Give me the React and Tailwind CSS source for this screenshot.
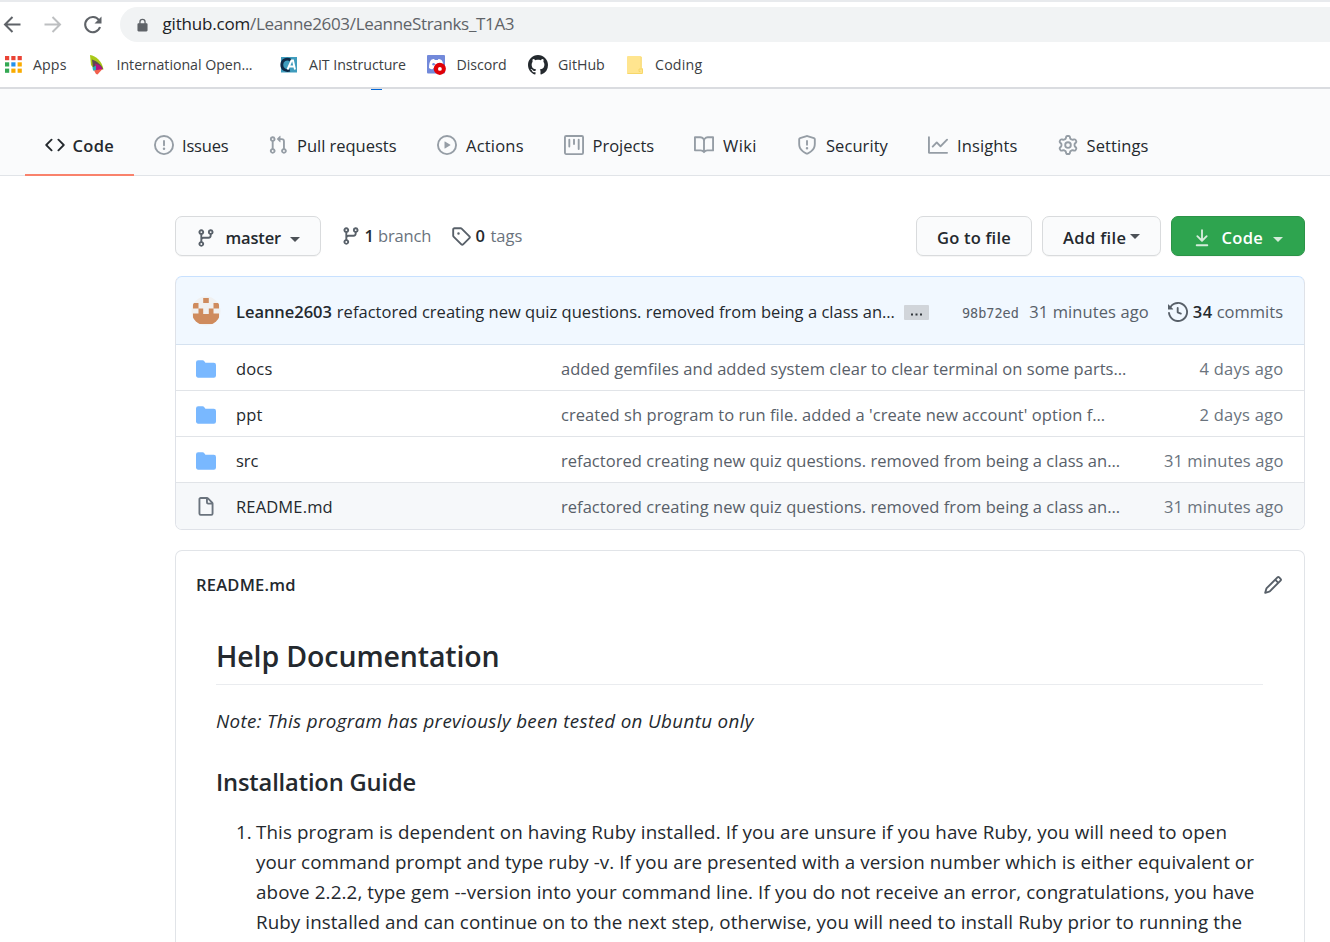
const paths = {
  code: "M4.72 3.22a.75.75 0 011.06 1.06L2.06 8l3.72 3.72a.75.75 0 11-1.06 1.06L.47 8.53a.75.75 0 010-1.06l4.25-4.25zm6.56 0a.75.75 0 10-1.06 1.06L13.94 8l-3.72 3.72a.75.75 0 101.06 1.06l4.25-4.25a.75.75 0 000-1.06l-4.25-4.25z",
  issue: "M8 1.5a6.5 6.5 0 100 13 6.5 6.5 0 000-13zM0 8a8 8 0 1116 0A8 8 0 010 8zm9 3a1 1 0 11-2 0 1 1 0 012 0zm-.25-6.25a.75.75 0 00-1.5 0v3.5a.75.75 0 001.5 0v-3.5z",
  pull: "M7.177 3.073L9.573.677A.25.25 0 0110 .854v4.792a.25.25 0 01-.427.177L7.177 3.427a.25.25 0 010-.354zM3.75 2.5a.75.75 0 100 1.5.75.75 0 000-1.5zm-2.25.75a2.25 2.25 0 113 2.122v5.256a2.251 2.251 0 11-1.5 0V5.372A2.25 2.25 0 011.5 3.25zM11 2.5h-1V4h1a1 1 0 011 1v5.628a2.251 2.251 0 101.5 0V5A2.5 2.5 0 0011 2.5zm1 10.25a.75.75 0 111.5 0 .75.75 0 01-1.5 0zM3.75 12a.75.75 0 100 1.5.75.75 0 000-1.5z",
  play: "M1.5 8a6.5 6.5 0 1113 0 6.5 6.5 0 01-13 0zM8 0a8 8 0 100 16A8 8 0 008 0zM6.379 5.227A.25.25 0 006 5.442v5.117a.25.25 0 00.379.214l4.264-2.559a.25.25 0 000-.428L6.379 5.227z",
  project: "M1.75 0A1.75 1.75 0 000 1.75v12.5C0 15.216.784 16 1.75 16h12.5A1.75 1.75 0 0016 14.25V1.75A1.75 1.75 0 0014.25 0H1.75zM1.5 1.75a.25.25 0 01.25-.25h12.5a.25.25 0 01.25.25v12.5a.25.25 0 01-.25.25H1.75a.25.25 0 01-.25-.25V1.75zM11.75 3a.75.75 0 00-.75.75v7.5a.75.75 0 001.5 0v-7.5a.75.75 0 00-.75-.75zm-8.25.75a.75.75 0 011.5 0v5.5a.75.75 0 01-1.5 0v-5.5zM8 3a.75.75 0 00-.75.75v3.5a.75.75 0 001.5 0v-3.5A.75.75 0 008 3z",
  book: "M0 1.75A.75.75 0 01.75 1h4.253c1.227 0 2.317.59 3 1.501A3.744 3.744 0 0111.006 1h4.245a.75.75 0 01.75.75v10.5a.75.75 0 01-.75.75h-4.507a2.25 2.25 0 00-1.591.659l-.622.621a.75.75 0 01-1.06 0l-.622-.621A2.25 2.25 0 005.258 13H.75a.75.75 0 01-.75-.75V1.75zm8.755 3a2.25 2.25 0 012.25-2.25H14.5v9h-3.757c-.71 0-1.4.201-1.992.572l.004-7.322zm-1.504 7.324l.004-5.073-.002-2.253A2.25 2.25 0 005.003 2.5H1.5v9h3.757a3.75 3.75 0 011.994.574z",
  shield: "M7.467.133a1.75 1.75 0 011.066 0l5.25 1.68A1.75 1.75 0 0115 3.48V7c0 1.566-.32 3.182-1.303 4.682-.983 1.498-2.585 2.813-5.032 3.855a1.7 1.7 0 01-1.33 0c-2.447-1.042-4.049-2.357-5.032-3.855C1.32 10.182 1 8.566 1 7V3.48a1.75 1.75 0 011.217-1.667l5.25-1.68zm.61 1.429a.25.25 0 00-.153 0l-5.25 1.68a.25.25 0 00-.174.238V7c0 1.358.275 2.666 1.057 3.86.784 1.194 2.121 2.34 4.366 3.297a.2.2 0 00.154 0c2.245-.956 3.582-2.104 4.366-3.298C13.225 9.666 13.5 8.36 13.5 7V3.48a.25.25 0 00-.174-.237l-5.25-1.68zM9 10.5a1 1 0 11-2 0 1 1 0 012 0zm-.25-5.75a.75.75 0 10-1.5 0v3a.75.75 0 001.5 0v-3z",
  graph: "M1.5 1.75a.75.75 0 00-1.5 0v12.5c0 .414.336.75.75.75h14.5a.75.75 0 000-1.5H1.5V1.75zm14.28 2.53a.75.75 0 00-1.06-1.06L10 7.94 7.53 5.47a.75.75 0 00-1.06 0L3.22 8.72a.75.75 0 001.06 1.06L7 7.06l2.47 2.47a.75.75 0 001.06 0l5.25-5.25z",
  gear: "M7.429 1.525a6.593 6.593 0 011.142 0c.036.003.108.036.137.146l.289 1.105c.147.56.55.967.997 1.189.174.086.341.183.501.29.417.278.97.423 1.53.27l1.102-.303c.11-.03.175.016.195.046.219.31.41.641.573.989.014.031.022.11-.059.19l-.815.806c-.411.406-.562.957-.53 1.456a4.588 4.588 0 010 .582c-.032.499.119 1.05.53 1.456l.815.806c.08.08.073.159.059.19a6.494 6.494 0 01-.573.99c-.02.029-.086.074-.195.045l-1.103-.303c-.559-.153-1.112-.008-1.529.27-.16.107-.327.204-.5.29-.449.222-.851.628-.998 1.189l-.289 1.105c-.029.11-.101.143-.137.146a6.613 6.613 0 01-1.142 0c-.036-.003-.108-.037-.137-.146l-.289-1.105c-.147-.56-.55-.967-.997-1.189a4.502 4.502 0 01-.501-.29c-.417-.278-.97-.423-1.53-.27l-1.102.303c-.11.03-.175-.016-.195-.046a6.492 6.492 0 01-.573-.989c-.014-.031-.022-.11.059-.19l.815-.806c.411-.406.562-.957.53-1.456a4.587 4.587 0 010-.582c.032-.499-.119-1.05-.53-1.456l-.815-.806c-.08-.08-.073-.159-.059-.19a6.44 6.44 0 01.573-.99c.02-.029.086-.075.195-.045l1.103.303c.559.153 1.112.008 1.529-.27.16-.107.327-.204.5-.29.449-.222.851-.628.998-1.189l.289-1.105c.029-.11.101-.143.137-.146zM8 0c-.236 0-.47.01-.701.03-.743.065-1.29.615-1.458 1.261l-.29 1.106c-.017.066-.078.158-.211.224a5.994 5.994 0 00-.668.386c-.123.082-.233.09-.3.071L3.27 2.776c-.644-.177-1.392.02-1.82.63a7.977 7.977 0 00-.704 1.217c-.315.675-.111 1.422.363 1.891l.815.806c.05.048.098.147.088.294a6.084 6.084 0 000 .772c.01.147-.038.246-.088.294l-.815.806c-.474.469-.678 1.216-.363 1.891.2.428.436.835.704 1.218.428.609 1.176.806 1.82.63l1.103-.303c.066-.019.176-.011.299.071.213.143.436.272.668.386.133.066.194.158.212.224l.289 1.106c.169.646.715 1.196 1.458 1.26a8.094 8.094 0 001.402 0c.743-.064 1.29-.614 1.458-1.26l.29-1.106c.017-.066.078-.158.211-.224a5.98 5.98 0 00.668-.386c.123-.082.233-.09.3-.071l1.102.302c.644.177 1.392-.02 1.82-.63.268-.382.505-.789.704-1.217.315-.675.111-1.422-.364-1.891l-.814-.806c-.05-.048-.098-.147-.088-.294a6.1 6.1 0 000-.772c-.01-.147.039-.246.088-.294l.814-.806c.475-.469.679-1.216.364-1.891a7.992 7.992 0 00-.704-1.218c-.428-.609-1.176-.806-1.82-.63l-1.103.303c-.066.019-.176.011-.299-.071a5.991 5.991 0 00-.668-.386c-.133-.066-.194-.158-.212-.224L10.16 1.29C9.99.645 9.444.095 8.701.031A8.094 8.094 0 008 0zm1.5 8a1.5 1.5 0 11-3 0 1.5 1.5 0 013 0zM11 8a3 3 0 11-6 0 3 3 0 016 0z",
  branch: "M11.75 2.5a.75.75 0 100 1.5.75.75 0 000-1.5zm-2.25.75a2.25 2.25 0 113 2.122V6A2.5 2.5 0 0110 8.5H6a1 1 0 00-1 1v1.128a2.251 2.251 0 11-1.5 0V5.372a2.25 2.25 0 111.5 0v1.836A2.492 2.492 0 016 7h4a1 1 0 001-1v-.628A2.25 2.25 0 019.5 3.25zM4.25 12a.75.75 0 100 1.5.75.75 0 000-1.5zM3.5 3.25a.75.75 0 111.5 0 .75.75 0 01-1.5 0z",
  tag: "M2.5 7.775V2.75a.25.25 0 01.25-.25h5.025a.25.25 0 01.177.073l6.25 6.25a.25.25 0 010 .354l-5.025 5.025a.25.25 0 01-.354 0l-6.25-6.25a.25.25 0 01-.073-.177zm-1.5 0V2.75C1 1.784 1.784 1 2.75 1h5.025c.464 0 .91.184 1.238.513l6.25 6.25a1.75 1.75 0 010 2.474l-5.026 5.026a1.75 1.75 0 01-2.474 0l-6.25-6.25A1.75 1.75 0 011 7.775zM6 5a1 1 0 100 2 1 1 0 000-2z",
  download: "M7.47 10.78a.75.75 0 001.06 0l3.75-3.75a.75.75 0 00-1.06-1.06L8.75 8.44V1.75a.75.75 0 00-1.5 0v6.69L4.78 5.97a.75.75 0 00-1.06 1.06l3.75 3.75zM3.75 13a.75.75 0 000 1.5h8.5a.75.75 0 000-1.5h-8.5z",
  history: "M1.643 3.143L.427 1.927A.25.25 0 000 2.104V5.75c0 .138.112.25.25.25h3.646a.25.25 0 00.177-.427L2.715 4.215a6.5 6.5 0 11-1.18 4.458.75.75 0 10-1.493.154 8.001 8.001 0 101.6-5.684zM7.75 4a.75.75 0 01.75.75v2.992l2.028.812a.75.75 0 01-.557 1.392l-2.5-1A.75.75 0 017 8.25v-3.5A.75.75 0 017.75 4z",
  folder: "M1.75 1A1.75 1.75 0 000 2.75v10.5C0 14.216.784 15 1.75 15h12.5A1.75 1.75 0 0016 13.25v-8.5A1.75 1.75 0 0014.25 3h-6.5a.25.25 0 01-.2-.1l-.9-1.2c-.33-.44-.85-.7-1.4-.7h-3.5z",
  file: "M3.75 1.5a.25.25 0 00-.25.25v11.5c0 .138.112.25.25.25h8.5a.25.25 0 00.25-.25V6H9.75A1.75 1.75 0 018 4.25V1.5H3.75zm5.75.56v2.19c0 .138.112.25.25.25h2.19L9.5 2.06zM2 1.75C2 .784 2.784 0 3.75 0h5.086c.464 0 .909.184 1.237.513l3.414 3.414c.329.328.513.773.513 1.237v8.086A1.75 1.75 0 0112.25 15h-8.5A1.75 1.75 0 012 13.25V1.75z",
  pencil: "M11.013 1.427a1.75 1.75 0 012.474 0l1.086 1.086a1.75 1.75 0 010 2.474l-8.61 8.61c-.21.21-.47.364-.756.445l-3.251.93a.75.75 0 01-.927-.928l.929-3.25a1.75 1.75 0 01.445-.758l8.61-8.61zm1.414 1.06a.25.25 0 00-.354 0L10.811 3.75l1.439 1.44 1.263-1.263a.25.25 0 000-.354l-1.086-1.086zM11.189 6.25L9.75 4.81l-6.286 6.287a.25.25 0 00-.064.108l-.558 1.953 1.953-.558a.249.249 0 00.108-.064l6.286-6.286z",
  github: "M8 0C3.58 0 0 3.58 0 8c0 3.54 2.29 6.53 5.47 7.59.4.07.55-.17.55-.38 0-.19-.01-.82-.01-1.49-2.01.37-2.53-.49-2.69-.94-.09-.23-.48-.94-.82-1.13-.28-.15-.68-.52-.01-.53.63-.01 1.08.58 1.23.82.72 1.21 1.87.87 2.33.66.07-.52.28-.87.51-1.07-1.78-.2-3.64-.89-3.64-3.95 0-.87.31-1.59.82-2.15-.08-.2-.36-1.02.08-2.12 0 0 .67-.21 2.2.82.64-.18 1.32-.27 2-.27.68 0 1.36.09 2 .27 1.53-1.04 2.2-.82 2.2-.82.44 1.1.16 1.92.08 2.12.51.56.82 1.27.82 2.15 0 3.07-1.87 3.75-3.65 3.95.29.25.54.73.54 1.48 0 1.07-.01 1.93-.01 2.2 0 .21.15.46.55.38A8.013 8.013 0 0016 8c0-4.42-3.58-8-8-8z",
};

function Icon({ name, className = "" }) {
  return (
    <svg viewBox="0 0 16 16" fill="currentColor" fillRule="evenodd" className={`size-5 shrink-0 ${className}`}>
      <path d={paths[name]} />
    </svg>
  );
}

function Caret({ className = "" }) {
  return (
    <svg viewBox="0 0 10 5" fill="currentColor" className={`h-[5px] w-2.5 shrink-0 ${className}`}>
      <path d="M0 0h10L5 5z" />
    </svg>
  );
}

function Toolbar() {
  return (
    <div className="flex h-[35px] items-center text-[#5f6368]">
      <svg viewBox="0 0 120 35" className="h-[35px] w-[120px] shrink-0" fill="none" stroke="currentColor" strokeWidth="2">
        <path d="M20.5 17.5H5.5M12.5 10l-7.5 7.5 7.5 7.5" />
        <path d="M44.5 17.5h15M52.5 10l7.5 7.5-7.5 7.5" stroke="#bdbfc1" />
        <path d="M99 13.2A7.6 7.6 0 1 0 100 20" strokeWidth="2.1" />
        <path d="M101.5 9.5v7h-7z" fill="currentColor" stroke="none" />
      </svg>
      <div className="flex h-[35px] flex-1 items-center rounded-l-full bg-[#f1f3f4] pl-[17px]">
        <svg viewBox="0 0 12 14" className="h-3.5 w-[11px] shrink-0" fill="currentColor">
          <path fillRule="evenodd" d="M2.5 5V3.7a3.5 3.5 0 0 1 7 0V5h.8c.7 0 1.2.5 1.2 1.2v6.6c0 .7-.5 1.2-1.2 1.2H1.700C1 14 .5 13.5.5 12.8V6.2C.5 5.500 1 5 1.700 5zM3.900 5h4.200V3.700a2.100 2.100 0 0 0-4.200 0z" />
        </svg>
        <div className="ml-[14.5px] -mt-px whitespace-pre text-[17px] leading-6">
          <span className="tracking-[-0.19px] text-[#202124]">github.com</span>
          <span className="tracking-[-0.33px]">/Leanne2603/LeanneStranks_T1A3</span>
        </div>
      </div>
    </div>
  );
}

function AppsIcon() {
  const colors = ["#ea4335", "#ea4335", "#ea4335", "#34a853", "#2491eb", "#f9ab00", "#34a853", "#f9ab00", "#f9ab00"];
  return (
    <svg viewBox="0 0 17 17" className="ml-px size-[17px]">
      {colors.map((c, i) => (
        <rect key={i} x={(i % 3) * 6.3} y={Math.floor(i / 3) * 6.3} width="4.2" height="4.2" fill={c} />
      ))}
    </svg>
  );
}

function OpenIcon() {
  return (
    <svg viewBox="0 0 14 20" className="ml-[1.5px] h-5 w-3.5">
      <path d="M0 0C6 1 12 6 13.500 14.500L4 14 1 10z" fill="#a9c916" />
      <path d="M2 4.500C7 6 11 9.500 13 14L3 13z" fill="#5d4a50" />
      <path d="M5 8.500C9 9.500 12 11.500 12.500 14.500L6 16z" fill="#b5127f" />
      <path d="M2.500 12.500L6 10.500v5.500l-3-.5z" fill="#29a9b8" />
      <path d="M4 15.500L12.500 14 7.500 19.500 6 19z" fill="#f2604d" />
    </svg>
  );
}

function AitIcon() {
  return (
    <svg viewBox="0 0 17 16" className="h-4 w-[17px]">
      <rect x="1" y="0" width="16" height="15.5" fill="#3f9cbd" />
      <path d="M10.800 3.200C6.500 .8 1.800 3 1.800 7.800c0 4.500 4.200 6.700 8 5.400" fill="none" stroke="#0e2a47" strokeWidth="2.8" />
      <path d="M7.500 12.500L11.500 3.500h1.500L15 12.500M9 9.500h5" fill="none" stroke="#fff" strokeWidth="1.9" />
    </svg>
  );
}

function DiscordIcon() {
  return (
    <svg viewBox="0 0 19 20" className="h-5 w-[19px]">
      <rect width="18" height="18.5" rx="1" fill="#7289da" />
      <path d="M2 13c0-4 .8-6.500 2-8 1.200-.8 2.300-1 3.200-1l.5 1h3.200l.5-1c1 0 2 .3 3.100 1 1.200 1.500 2 4 2 8-1.200 1-2.300 1.300-3.500 1.300l-.8-1.100H6.400l-.8 1.100C4.400 14.300 3 13.700 2 13z" fill="#fff" />
      <circle cx="6.6" cy="9.3" r="1.3" fill="#7289da" />
      <circle cx="11.6" cy="9.3" r="1.3" fill="#7289da" />
      <circle cx="12.8" cy="13.8" r="6.1" fill="#e00007" />
      <circle cx="12.9" cy="13.9" r="1.9" fill="#fff" />
    </svg>
  );
}

function FolderBookmark() {
  return (
    <svg viewBox="0 0 16 18" className="h-[18px] w-4">
      <path d="M0 1a1 1 0 0 1 1-1h12.500a1 1 0 0 1 1 1v11H15a1 1 0 0 1 1 1v4a1 1 0 0 1-1 1H1a1 1 0 0 1-1-1z" fill="#ffe58f" />
      <path d="M14.200 1v11.500M.5 17.500H15a.7.7 0 0 0 .5-.7V13H12v2.500h1.500" fill="none" stroke="#f5d564" strokeWidth=".9" />
    </svg>
  );
}

function Bookmark({ icon, className, iconClass, children }) {
  return (
    <div className={`flex items-center whitespace-pre text-[14.2px] text-[#3c4043] ${className}`}>
      <span className={`flex shrink-0 items-center ${iconClass}`}>{icon}</span>
      {children}
    </div>
  );
}

function Bookmarks() {
  return (
    <div className="flex h-[45px] items-center pl-1">
      <Bookmark className="w-[84px] tracking-[0.1px]" iconClass="w-[29px]" icon={<AppsIcon />}>Apps</Bookmark>
      <Bookmark className="w-[192px] tracking-[-0.03px]" iconClass="w-[28.5px]" icon={<OpenIcon />}>International Open...</Bookmark>
      <Bookmark className="w-[147px] tracking-[-0.05px]" iconClass="w-[29px]" icon={<AitIcon />}>AIT Instructure</Bookmark>
      <Bookmark className="w-[101px] tracking-[-0.06px]" iconClass="w-[29.5px]" icon={<DiscordIcon />}>Discord</Bookmark>
      <Bookmark className="w-[99px]" iconClass="w-[30px] text-[#24292e]" icon={<Icon name="github" />}>GitHub</Bookmark>
      <Bookmark className="tracking-[0.2px]" iconClass="w-7" icon={<FolderBookmark />}>Coding</Bookmark>
    </div>
  );
}

const tabs = [
  ["code", "Code", "w-[109px]", "-ml-[0.5px] tracking-[0.3px] font-semibold"],
  ["issue", "Issues", "w-[114px]", "tracking-[-0.18px]"],
  ["pull", "Pull requests", "w-[169px]", "ml-px tracking-[-0.02px]"],
  ["play", "Actions", "w-[127px]", "ml-px tracking-[0.2px]"],
  ["project", "Projects", "w-[130px]", "ml-[0.5px]"],
  ["book", "Wiki", "w-[103px]", "ml-px tracking-[0.4px]"],
  ["shield", "Security", "w-[131px]", "ml-px tracking-[0.07px]"],
  ["graph", "Insights", "w-[130px]", "ml-px tracking-[0.11px]"],
  ["gear", "Settings", "w-[131px]", "ml-[0.5px] tracking-[0.1px]"],
];

function RepoNav() {
  return (
    <nav className="flex h-[87px] shrink-0 items-end border-b border-[#e1e4e8] bg-[#fafbfc] pl-[25px] text-[#24292e]">
      {tabs.map(([icon, label, width, tracking], i) => (
        <a
          key={label}
          className={`-mb-px flex h-[61px] shrink-0 items-center border-b-2 pl-5 ${width} ${i === 0 ? "border-[#f9826c]" : "border-transparent"}`}
        >
          <Icon name={icon} className={`mr-2 ${i === 0 ? "text-[#24292e]" : "text-[#959da5]"}`} />
          <span className={`whitespace-pre pt-[3px] ${tracking}`}>{label}</span>
        </a>
      ))}
    </nav>
  );
}

const btn = "flex h-10 items-center rounded-[7px] border pl-5 font-semibold shadow-[0_1px_0_rgba(27,31,35,0.04)] whitespace-pre";
const grayBtn = `${btn} border-[#d9dbdd] bg-[#fafbfc]`;

function Actions() {
  return (
    <div className="flex h-10 items-center">
      <div className={`${grayBtn} w-[146px]`}>
        <Icon name="branch" className="mt-[3px] text-[#586069]" />
        <span className="ml-[9.5px] w-[64px] pt-[3px] tracking-[-0.17px]">master</span>
        <Caret className="mt-[7px] text-[#4c5157]" />
      </div>
      <div className="ml-5 flex w-[110px] items-center whitespace-pre">
        <Icon name="branch" className="text-[#586069]" />
        <span className="ml-[3.5px] font-semibold">1</span>
        <span className="ml-1 tracking-[-0.15px] text-[#6a737d]">branch</span>
      </div>
      <div className="flex items-center whitespace-pre">
        <Icon name="tag" className="text-[#586069]" />
        <span className="ml-[4.5px] font-semibold">0</span>
        <span className="ml-[5.5px] text-[#6a737d]">tags</span>
      </div>
      <div className="ml-auto flex gap-2.5">
        <div className={`${grayBtn} w-[116px]`}>
          <span className="pt-[3px] tracking-[0.2px]">Go to file</span>
        </div>
        <div className={`${grayBtn} w-[119px]`}>
          <span className="w-[67px] pt-[3px] tracking-[0.38px]">Add file</span>
          <Caret className="text-[#4c5157]" />
        </div>
        <div className={`${btn} w-[134px] border-[#2b9347] bg-[#2ea44f] text-white`}>
          <Icon name="download" className="mt-[3px] opacity-80" />
          <span className="ml-[9.5px] w-[51.5px] pt-[3px] tracking-[0.3px]">Code</span>
          <Caret className="mt-[7px] opacity-80" />
        </div>
      </div>
    </div>
  );
}

function Avatar() {
  return (
    <svg viewBox="0 0 30 30" className="size-[30px] shrink-0">
      <clipPath id="round"><circle cx="15" cy="15" r="14.5" /></clipPath>
      <g clipPath="url(#round)">
        <rect width="30" height="30" fill="#f0f0f0" />
        <path
          d="M12.200 2h5.600v5h-5.600zM2 7h5.500v5.500H2zM22.500 7H28v5.500h-5.500zM7.500 12.500h4.700V18h5.600v-5.500h4.700V17.500H28V24l-4 4H6l-4-4v-6.500h5.500z"
          fill="#cf8b5d"
        />
      </g>
    </svg>
  );
}

const rows = [
  ["folder", "docs", "tracking-[0.17px]", "added gemfiles and added system clear to clear terminal on some parts…", "tracking-[0.035px]", "4 days ago", "tracking-[0.25px]"],
  ["folder", "ppt", "tracking-[0.1px]", "created sh program to run file. added a 'create new account' option f…", "tracking-[0.06px]", "2 days ago", "tracking-[0.25px]"],
  ["folder", "src", "", "refactored creating new quiz questions. removed from being a class an…", "tracking-[0.033px]", "31 minutes ago", "tracking-[0.1px]"],
  ["file", "README.md", "tracking-[0.15px]", "refactored creating new quiz questions. removed from being a class an…", "tracking-[0.033px]", "31 minutes ago", "tracking-[0.1px]"],
];

function FileBox() {
  return (
    <div className="mt-5 overflow-hidden rounded-[7px] border border-[#dfe2e8] border-t-[#c8e1ff]">
      <div className="-mx-px flex h-[68px] items-center rounded-t-[7px] border-x border-b border-x-[#c8e1ff] border-b-[#d5e2f0] bg-[#f1f8ff] pl-[15px] pr-[21px] whitespace-pre">
        <Avatar />
        <span className="ml-[15px] pt-[3px] font-semibold tracking-[-0.04px]">Leanne2603</span>
        <span className="ml-[5px] w-[567px] pt-[3px] tracking-[0.02px]">refactored creating new quiz questions. removed from being a class an…</span>
        <span className="mt-1 flex h-[15px] w-[25px] items-center justify-center rounded-[1px] bg-[#d1d5da]">
          <svg viewBox="0 0 11 3" className="mt-[3px] h-[3px] w-[11px]" fill="#33383d"><path d="M0 .5h2v2H0zM4.500.5h2v2h-2zM9 .5h2v2H9z" /></svg>
        </span>
        <span className="ml-auto pt-1 font-['DejaVu_Sans_Mono',monospace] text-[13.5px] text-[#586069]">98b72ed</span>
        <span className="ml-[10.5px] w-[139px] pt-[3px] tracking-[0.09px] text-[#586069]">31 minutes ago</span>
        <Icon name="history" className="mt-[3px] text-[#586069]" />
        <span className="ml-[4.5px] pt-[3px] font-semibold tracking-[0.5px]">34</span>
        <span className="ml-1 pt-[3px] text-[#586069]">commits</span>
      </div>
      {rows.map(([icon, name, nt, msg, mt, time, tt], i) => (
        <div
          key={name}
          className={`flex h-[46px] items-center border-b pl-5 pr-5 whitespace-pre ${i < 3 ? "border-[#e1e4e8]" : "border-[#f6f8fa] bg-[#f6f8fa]"}`}
        >
          <Icon name={icon} className={`mt-[2px] ${icon === "folder" ? "text-[#79b8ff]" : "text-[#6a737d]"}`} />
          <span className={`ml-5 w-[325px] pt-[3px] ${nt}`}>{name}</span>
          <span className={`flex-1 pt-[3px] text-[#586069] ${mt}`}>{msg}</span>
          <span className={`pr-[0.5px] pt-[3px] text-[#6a737d] ${tt}`}>{time}</span>
        </div>
      ))}
    </div>
  );
}

const lines = [
  ["This program is dependent on having Ruby installed. If you are unsure if you have Ruby, you will need to open", "tracking-[0.116px]"],
  ["your command prompt and type ruby -v. If you are presented with a version number which is either equivalent or", "tracking-[0.067px]"],
  ["above 2.2.2, type gem --version into your command line. If you do not receive an error, congratulations, you have", "tracking-[0.116px]"],
  ["Ruby installed and can continue on to the next step, otherwise, you will need to install Ruby prior to running the", "tracking-[0.09px]"],
];

function Readme() {
  return (
    <div className="mt-5 h-[420px] rounded-t-[7px] border border-b-0 border-[#e1e4e8] px-5">
      <div className="flex h-[66px] items-center justify-between pt-px">
        <span className="font-semibold tracking-[0.22px]">README.md</span>
        <Icon name="pencil" className="mr-px mt-px text-[#586069]" />
      </div>
      <div className="ml-5 mr-[21px] whitespace-pre text-[18.8px] leading-[30px]">
        <h1 className="flex h-[68px] items-end border-b border-[#eaecef] pb-[8px] text-[28.5px] font-[560] leading-[39px] tracking-[-0.12px]">Help Documentation</h1>
        <p className="mt-[21px] italic tracking-[0.36px]">Note: This program has previously been tested on Ubuntu only</p>
        <h2 className="mt-[31px] text-[23.7px] font-[570] tracking-[-0.15px]">Installation Guide</h2>
        <ol className="mt-5">
          <li className="flex">
            <span className="w-10 pl-5">1.</span>
            <div>
              {lines.map(([text, tracking]) => (
                <p key={text} className={tracking}>{text}</p>
              ))}
            </div>
          </li>
        </ol>
      </div>
    </div>
  );
}

export default function App() {
  return (
    <div className="flex h-[942px] w-[1330px] flex-col overflow-hidden bg-white font-['Open_Sans','Noto_Sans',sans-serif] text-[16.5px] leading-6 text-[#24292e]">
      <header className="h-[89px] shrink-0 border-t-2 border-b-2 border-t-[#e8eaed] border-b-[#dadce0] pt-[5px]">
        <Toolbar />
        <Bookmarks />
      </header>
      <div className="z-10 -mb-px ml-[371px] h-px w-[11px] shrink-0 bg-[#0366d6]" />
      <RepoNav />
      <main className="w-[1305px] pl-[175px] pt-10">
        <Actions />
        <FileBox />
        <Readme />
      </main>
    </div>
  );
}
